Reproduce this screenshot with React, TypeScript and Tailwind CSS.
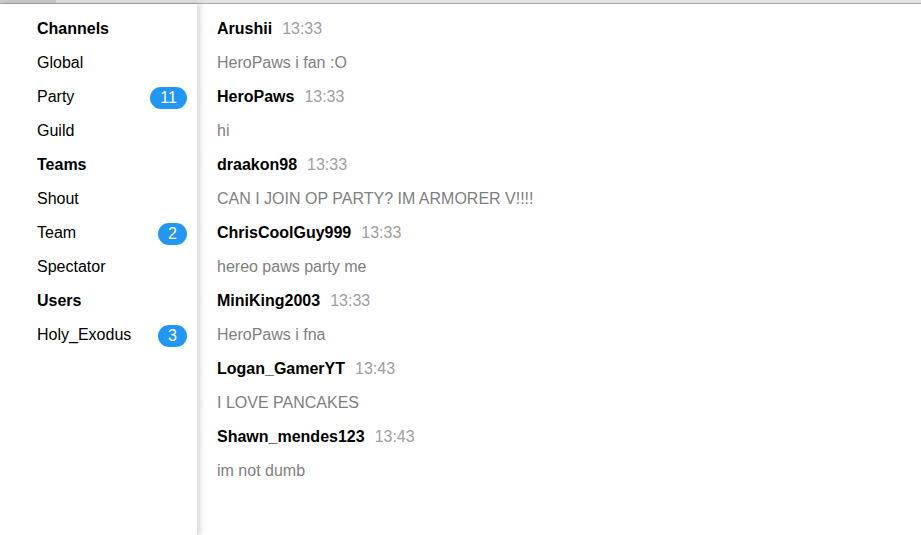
import React from "react";

type Item = { label: string; bold?: boolean; badge?: string };

const items: Item[] = [
  { label: "Channels", bold: true },
  { label: "Global" },
  { label: "Party", badge: "11" },
  { label: "Guild" },
  { label: "Teams", bold: true },
  { label: "Shout" },
  { label: "Team", badge: "2" },
  { label: "Spectator" },
  { label: "Users", bold: true },
  { label: "Holy_Exodus", badge: "3" },
];

const msgs = [
  ["Arushii", "13:33", "HeroPaws i fan :O"],
  ["HeroPaws", "13:33", "hi"],
  ["draakon98", "13:33", "CAN I JOIN OP PARTY? IM ARMORER V!!!!"],
  ["ChrisCoolGuy999", "13:33", "hereo paws party me"],
  ["MiniKing2003", "13:33", "HeroPaws i fna"],
  ["Logan_GamerYT", "13:43", "I LOVE PANCAKES"],
  ["Shawn_mendes123", "13:43", "im not dumb"],
];

export default function App() {
  return (
    <div
      className="w-[921px] h-[535px] bg-white flex flex-col overflow-hidden text-[16px]"
      style={{ fontFamily: '"Liberation Sans", Arial, sans-serif' }}
    >
      <div className="h-[4px] flex border-b border-[#a9a9a9] bg-[#e3e3e3]">
        <div className="w-[56px] bg-[#cdcdcd]" />
      </div>
      <div className="flex flex-1 min-h-0">
        <div className="w-[198px] shrink-0 relative z-10 bg-white shadow-[2px_0_6px_rgba(0,0,0,0.18)] border-r border-[#e0e0e0] pt-[8px] pl-[37px] pr-[10px]">
          {items.map((it) => (
            <div key={it.label} className="h-[34px] flex items-center justify-between">
              <span className={it.bold ? "font-bold text-black" : "text-black"}>{it.label}</span>
              {it.badge && (
                <span
                  className={
                    "h-[22px] rounded-full bg-[#2196f3] text-white flex items-center justify-center mt-[2px] " +
                    (it.badge.length > 1 ? "w-[37px]" : "w-[29px]")
                  }
                >
                  {it.badge}
                </span>
              )}
            </div>
          ))}
        </div>
        <div className="flex-1 pt-[8px] pl-[19px]">
          {msgs.map(([u, t, m]) => (
            <React.Fragment key={u}>
              <div className="h-[34px] flex items-center">
                <span className="font-bold text-black">{u}</span>
                <span className="ml-[10px] text-[#9e9e9e]">{t}</span>
              </div>
              <div className="h-[34px] flex items-center text-[#808080]">{m}</div>
            </React.Fragment>
          ))}
        </div>
      </div>
    </div>
  );
}
